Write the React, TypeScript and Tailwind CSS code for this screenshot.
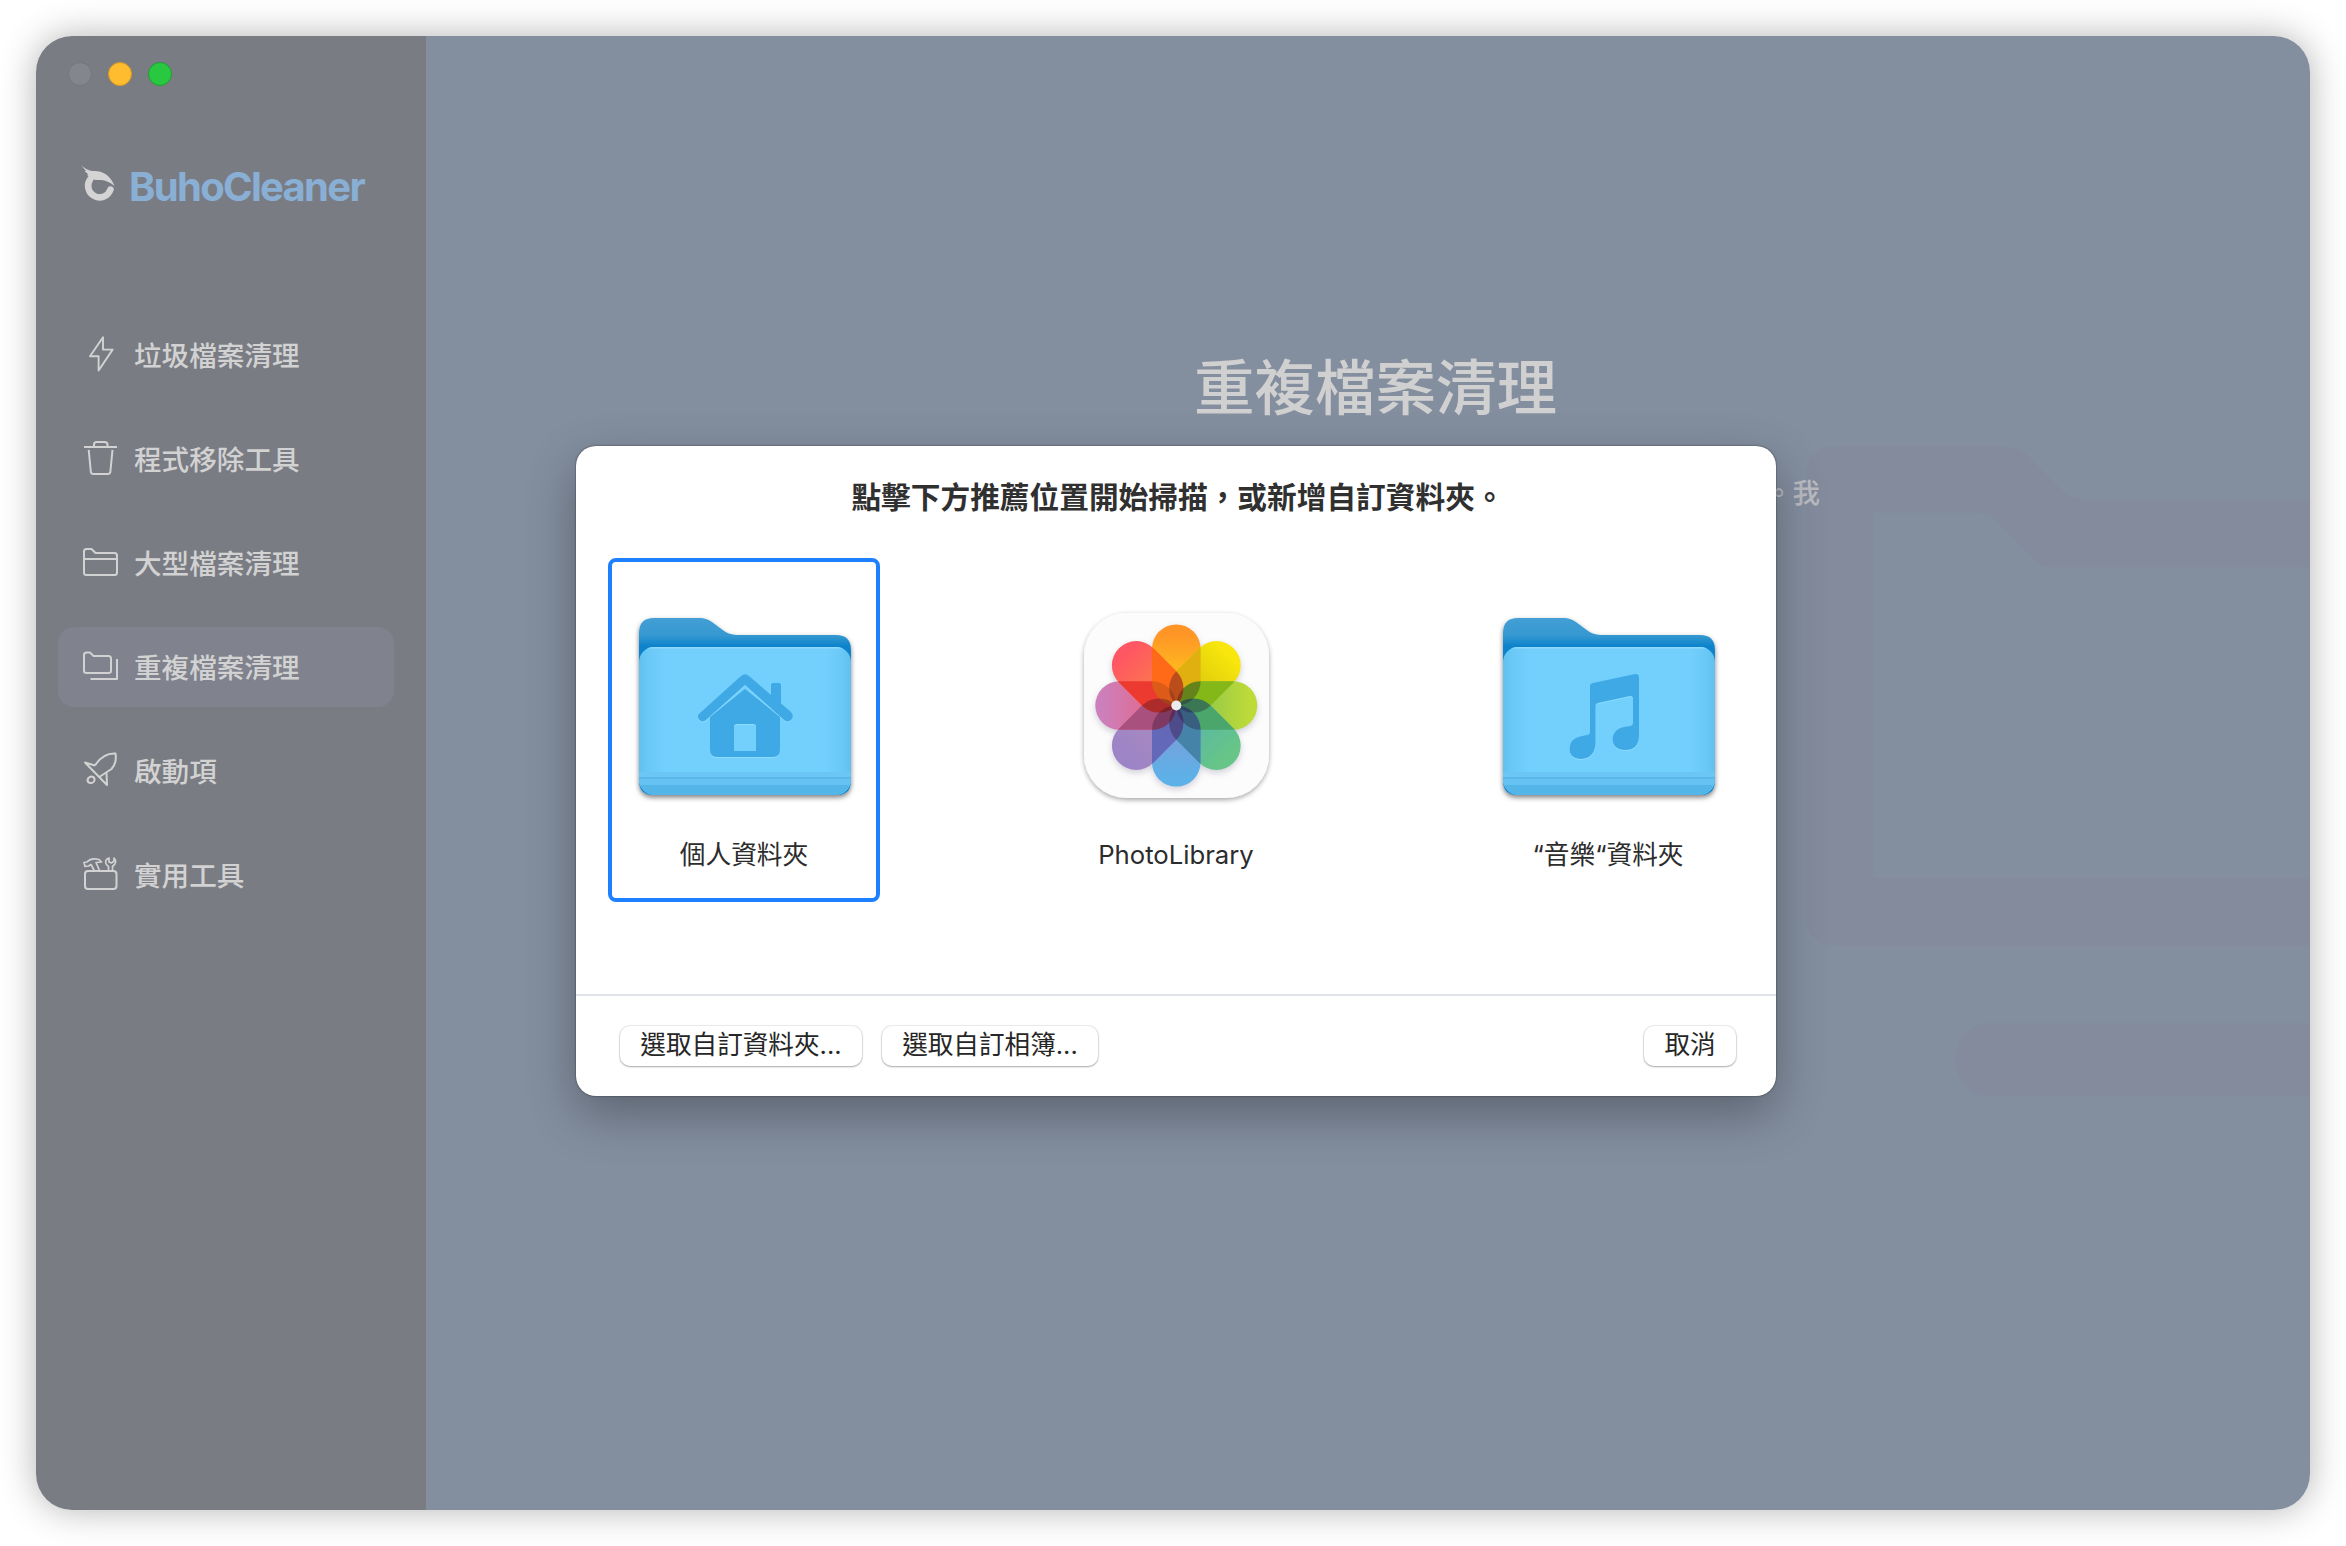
import React from "react";

const cjk = "font-['Inter','Noto_Sans_CJK_TC',sans-serif]";

const BoltIcon = () => (
  <svg width="36" height="38" viewBox="0 0 36 38" fill="none" stroke="currentColor" strokeWidth="1.9" strokeLinejoin="round">
    <path d="M21 2.2 8 21.2h8.6L16.6 35.5 30.6 14.6H21z" />
  </svg>
);

const TrashIcon = () => (
  <svg width="36" height="38" viewBox="0 0 36 38" fill="none" stroke="currentColor" strokeWidth="2" strokeLinejoin="round">
    <path d="M2 8h33M12 8V5.500Q12 3 14.500 3h8Q25.500 3 25.500 5.500V8M6.700 10.800 8.800 32.500Q9 35 11.200 35h14.600Q28.200 35 28.400 32.500L30.500 10.800" />
  </svg>
);

const FolderIcon = () => (
  <svg width="36" height="38" viewBox="0 0 36 38" fill="none" stroke="currentColor" strokeWidth="2" strokeLinejoin="round">
    <path d="M2 29.500V8.500Q2 6 4.500 6H9.500L13.500 10H32.500Q35 10 35 12.500V29.500Q35 32 32.500 32H4.500Q2 32 2 29.500zM2 16H35" />
  </svg>
);

const FoldersIcon = () => (
  <svg width="36" height="38" viewBox="0 0 36 38" fill="none" stroke="currentColor" strokeWidth="2" strokeLinejoin="round">
    <path d="M2 24V8Q2 5.500 4.500 5.500H8L11.500 9H26.500Q29 9 29 11.500V24Q29 26 26.500 26H4.500Q2 26 2 24zM35 12V32H8.500" />
  </svg>
);

const RocketIcon = () => (
  <svg width="36" height="38" viewBox="0 0 36 38" fill="none" stroke="currentColor" strokeWidth="2" strokeLinejoin="round">
    <path d="M13 14.500C18 6.500 25 2 33.500 2.500Q35 12 29.500 18L18 25.500M13 14.500 3 11.500 25 34 24.500 22" />
    <path d="M9.500 25.500Q13 26 12.500 29.500Q11.500 32 9 32Q5.500 32 5.500 29Q6 26 9.500 25.500z" />
  </svg>
);

const ToolboxIcon = () => (
  <svg width="36" height="38" viewBox="0 0 36 38" fill="none" stroke="currentColor" strokeWidth="2" strokeLinejoin="round">
    <rect x="3" y="16" width="31.500" height="18" rx="3" />
    <path d="M12.500 16 9 9.500 6.500 11 3 11.500 2 7.500 5 7Q9 2.500 17 4.500L19.500 7 14 7.500 17.500 15.500M26.500 16V11.500Q22 8.500 24.500 4.500L27 3V7L29.500 8 32 6V3Q36 7 30.500 11.500V16" strokeWidth="1.700" />
  </svg>
);

const menu = [
  { label: "垃圾檔案清理", icon: <BoltIcon /> },
  { label: "程式移除工具", icon: <TrashIcon /> },
  { label: "大型檔案清理", icon: <FolderIcon /> },
  { label: "重複檔案清理", icon: <FoldersIcon />, active: true },
  { label: "啟動項", icon: <RocketIcon /> },
  { label: "實用工具", icon: <ToolboxIcon /> },
];

const Logo = () => (
  <svg width="34" height="40" viewBox="0 0 34 40" fill="#d4d4d4" className="overflow-visible">
    <path d="M0 -1Q5 4 11 5Q27 3.500 33.500 20Q27 14.500 20 14Q12 14 9 12.500L6 8.500 7.500 8.500 3.500 5 5 5z" />
    <path d="M9 13.500A11.500 11.500 0 1 0 29.500 23.500" fill="none" stroke="#d4d4d4" strokeWidth="6.500" strokeLinecap="round" />
  </svg>
);

// folder artwork shared by the home and music locations
const Folder = ({ id, children }: { id: string; children: React.ReactNode }) => (
  <svg width="232" height="200" viewBox="0 0 232 200" className="block">
    <defs>
      <linearGradient id={id + "back"} x1="0" y1="0" x2="0" y2="1">
        <stop offset="0" stopColor="#439fd5" />
        <stop offset="0.100" stopColor="#3698d1" />
        <stop offset="0.160" stopColor="#0b83cb" />
        <stop offset="1" stopColor="#0079c5" />
      </linearGradient>
      <linearGradient id={id + "side"}>
        <stop offset="0" stopColor="#62c0f0" />
        <stop offset="0.040" stopColor="#6ac8f7" />
        <stop offset="0.120" stopColor="#73cffc" />
        <stop offset="0.880" stopColor="#73cffc" />
        <stop offset="0.960" stopColor="#6ac8f7" />
        <stop offset="1" stopColor="#62c0f0" />
      </linearGradient>
      <filter id={id + "shadow"} x="-10%" y="-10%" width="120%" height="120%">
        <feDropShadow dx="0" dy="2.500" stdDeviation="2.500" floodOpacity="0.500" />
      </filter>
      <clipPath id={id + "clip"}>
        <rect x="10" y="41" width="212" height="148" rx="15" />
      </clipPath>
    </defs>
    <g filter={`url(#${id}shadow)`}>
      <path
        d="M10 175V27Q10 12 25 12H71Q77 12 83 16L93 23.500Q99 28.500 108 29H207Q222 29 222 44V175Q222 189 207 189H25Q10 189 10 175z"
        fill={`url(#${id}back)`}
      />
    </g>
    <g clipPath={`url(#${id}clip)`}>
      <rect x="10" y="41" width="212" height="148" fill={`url(#${id}side)`} />
      <rect x="10" y="41" width="212" height="1.500" fill="#8edafd" />
      <rect x="10" y="166" width="212" height="5" fill="#6bc6f5" />
      <rect x="10" y="171" width="212" height="2" fill="#59b7e9" />
      <rect x="10" y="173" width="212" height="6" fill="#65c2f2" />
      <rect x="10" y="179" width="212" height="10" fill="#54b5e8" />
    </g>
    {children}
  </svg>
);

const HomeGlyph = () => (
  <g fill="#3fa9e6" className="drop-shadow-[0_1.5px_0.5px_#8cdcff]">
    <path d="M71.500 106.500 112 70Q116 66.500 120 70L142 89V79Q142 77 144 77H150Q152 77 152 79V97.500L161.500 105.500Q166 110 162 114Q158.500 117 154.500 113.500L116 79 77.500 113.500Q73.500 117 70.500 114Q67 110 71.500 106.500z" />
    <path
      fillRule="evenodd"
      d="M116 83 151 111V144Q151 151 144 151H88Q81 151 81 144V111zM108 118Q105 118 105 121V145H127V121Q127 118 124 118z"
    />
  </g>
);

const MusicGlyph = () => (
  <path
    fill="#3fa9e6"
    className="drop-shadow-[0_1.5px_0.5px_#8cdcff]"
    d="M97 80Q97 77.500 100 77L141 68.200Q146 67 146 71.500V130Q145.500 144 132 144Q120 143.500 119.500 133Q120.500 123 131 121L137.500 120Q140 119.500 140 117V92.500Q140 89.500 137 90L105 97Q102.500 97.500 102.500 100V138Q101 153 87 153Q76.500 152 76.500 143Q76.500 133 87 130.500L94 129Q97 128.500 97 126z"
  />
);

// clockwise from the top; overlap is the colour shared with the next petal
const petals = [
  { a: 0, from: "#ff9427", to: "#fdc21b", overlap: "#dfb010" },
  { a: 45, from: "#f8e60c", to: "#dcc80e", overlap: "#84b818" },
  { a: 90, from: "#bddb38", to: "#92c64a", overlap: "#4ba66c" },
  { a: 135, from: "#67c587", to: "#5ab8a4", overlap: "#4584a8" },
  { a: 180, from: "#5cb1e8", to: "#7a9fda", overlap: "#6368b8" },
  { a: 225, from: "#9d84c6", to: "#a98ac0", overlap: "#a9507f" },
  { a: 270, from: "#cd7fbb", to: "#e2698c", overlap: "#ec3a30" },
  { a: 315, from: "#ff5663", to: "#fb7a4c", overlap: "#ff6a18" },
];

const Petal = ({ angle, fill, opacity }: { angle: number; fill: string; opacity?: number }) => (
  <rect x="82" y="18.500" width="48.600" height="81" rx="24.300" fill={fill} opacity={opacity} transform={`rotate(${angle} 106.300 99.500)`} />
);

const Photos = () => (
  <svg width="214" height="200" viewBox="0 0 214 200" className="block">
    <defs>
      <filter id="appShadow" x="-10%" y="-10%" width="120%" height="120%">
        <feDropShadow dx="0" dy="2" stdDeviation="2.500" floodOpacity="0.350" />
      </filter>
      {petals.map((p) => (
        <React.Fragment key={p.a}>
          <linearGradient id={"petal" + p.a} x1="0" y1="0" x2="0" y2="1">
            <stop offset="0.100" stopColor={p.from} />
            <stop offset="0.700" stopColor={p.to} />
          </linearGradient>
          <clipPath id={"petalClip" + p.a}>
            <rect x="82" y="18.500" width="48.600" height="81" rx="24.300" transform={`rotate(${p.a} 106.300 99.500)`} />
          </clipPath>
        </React.Fragment>
      ))}
    </defs>
    <rect x="14" y="7" width="185" height="185" rx="43" fill="#fcfcfc" filter="url(#appShadow)" />
    <g className="drop-shadow-[0_3px_3px_rgba(80,80,120,0.25)]">
      {petals.map((p) => (
        <Petal key={p.a} angle={p.a} fill={`url(#petal${p.a})`} />
      ))}
    </g>
    {petals.map((p) => (
      <g key={p.a} clipPath={`url(#petalClip${p.a})`}>
        <Petal angle={p.a + 45} fill={p.overlap} />
      </g>
    ))}
    {petals.map((p) => (
      <g key={p.a} clipPath={`url(#petalClip${p.a})`}>
        <Petal angle={p.a + 90} fill="#1a0a20" opacity={p.a === 270 ? 0.15 : 0.3} />
      </g>
    ))}
    <circle cx="106.300" cy="99.500" r="5" fill="#ececec" />
  </svg>
);

const Location = ({ label, selected, children }: { label: string; selected?: boolean; children: React.ReactNode }) => (
  <div
    className={`flex h-[344px] w-[272px] flex-col items-center rounded-lg border-4 pt-11 pl-0.5 ${
      selected ? "border-[#1f80ff]" : "border-transparent"
    }`}
  >
    {children}
    <p className="mt-[31px] pr-0.5 text-[25.700px] leading-9 whitespace-nowrap text-[#2c2c2c]">{label}</p>
  </div>
);

const DialogButton = ({ label, width }: { label: string; width: string }) => (
  <button
    className={`${width} h-10 rounded-[10px] bg-white pb-0.5 text-[25.600px] leading-[38px] whitespace-nowrap text-[#262626] shadow-[0_0_1px_1px_rgba(0,0,0,0.08),0_1px_2px_rgba(0,0,0,0.28)]`}
  >
    {label}
  </button>
);

const Sidebar = () => (
  <aside className="w-[390px] shrink-0 bg-[#7a7c84]">
    <div className="flex gap-4 pt-[26px] pl-8">
      <span className="size-6 rounded-full border border-[#74767f] bg-[#83868e]" />
      <span className="size-6 rounded-full border border-[#d49a22] bg-[#febc2e]" />
      <span className="size-6 rounded-full border border-[#1f9e36] bg-[#28c840]" />
    </div>
    <div className="mt-[78px] flex h-[44px] items-center gap-3.5 pl-[45px]">
      <Logo />
      <span className="pt-0.5 text-[40px] font-bold tracking-[-1.700px] text-[#89afd5]">BuhoCleaner</span>
    </div>
    <nav className="mt-[107px] flex flex-col gap-6 pl-[22px]">
      {menu.map((item) => (
        <div
          key={item.label}
          className={`flex h-20 w-[336px] items-center gap-4 rounded-2xl pl-6 text-[27.600px] font-medium text-[#d2d2d2] ${
            item.active ? "bg-[#80828d]" : ""
          }`}
        >
          <span className="-mt-0.5">{item.icon}</span>
          <span className="pt-[3px]">{item.label}</span>
        </div>
      ))}
    </nav>
  </aside>
);

const App = () => {
  return (
    <div className={`h-[1546px] w-[2346px] bg-white p-9 ${cjk}`}>
      <div className="relative flex h-[1474px] w-[2274px] overflow-hidden rounded-[36px] shadow-[0_0_36px_rgba(0,0,0,0.3)]">
        <Sidebar />
        <main className="relative flex-1 overflow-hidden bg-[#838e9f]">
          <svg className="absolute top-[410px] right-0" width="504" height="660" viewBox="0 0 504 660" fill="#838b9d">
            <path
              fillRule="evenodd"
              d="M0 32Q0 0 32 0H196Q212 0 224 12L257 45Q265 53 276 53H504V121H246Q236 121 228 113L190 74Q182 67 172 67H67V432H504V500H32Q0 500 0 468z"
            />
            <rect x="149" y="577" width="400" height="73" rx="36.500" />
          </svg>
          <h1 className="absolute top-[308px] left-[768px] text-[60.500px] leading-[88px] font-medium whitespace-nowrap text-[#d0d0d0]">重複檔案清理</h1>
          <p className="absolute top-[437px] left-[1339px] text-[27.500px] leading-10 font-medium whitespace-nowrap text-[#b9bbc0]">。我</p>
        </main>
        <section className="absolute top-[410px] left-[540px] flex h-[650px] w-[1200px] flex-col rounded-[20px] bg-white shadow-[0_0_2px_rgba(0,0,0,0.6),0_18px_50px_rgba(0,0,0,0.3)]">
          <h2 className="pt-[31px] pl-1 text-center text-[29.700px] leading-[41px] font-bold text-[#303030]">點擊下方推薦位置開始掃描，或新增自訂資料夾。</h2>
          <div className="mt-10 flex justify-between px-8">
            <Location label="個人資料夾" selected>
              <Folder id="home"><HomeGlyph /></Folder>
            </Location>
            <Location label="PhotoLibrary">
              <Photos />
            </Location>
            <Location label="“音樂“資料夾">
              <Folder id="music"><MusicGlyph /></Folder>
            </Location>
          </div>
          <div className="mt-auto flex h-[102px] border-t-2 border-[#e0e4ea] px-10 pt-[30px] pl-11">
            <DialogButton label="選取自訂資料夾..." width="w-[242px]" />
            <div className="w-5" />
            <DialogButton label="選取自訂相簿..." width="w-[216px]" />
            <div className="ml-auto">
              <DialogButton label="取消" width="w-[92px]" />
            </div>
          </div>
        </section>
      </div>
    </div>
  );
};

export default App;
